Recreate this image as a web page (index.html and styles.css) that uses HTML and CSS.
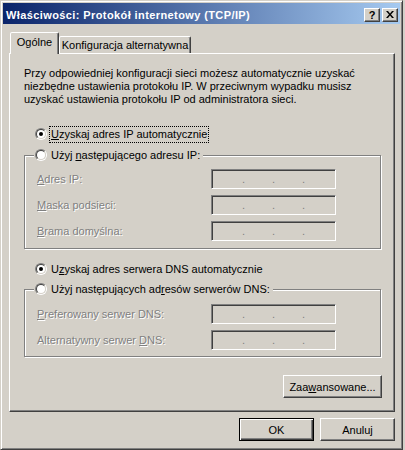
FILE: index.html
```html
<!DOCTYPE html>
<html lang="pl">
<head>
<meta charset="utf-8">
<title>Właściwości: Protokół internetowy (TCP/IP)</title>
<link rel="stylesheet" href="styles.css">
</head>
<body>
<div class="window">
  <div class="titlebar">
    <span class="title">Właściwości: Protokół internetowy (TCP/IP)</span>
    <div class="caption-btns">
      <button class="cap-btn help">?</button>
      <button class="cap-btn close"><svg width="8" height="7" viewBox="0 0 8 7"><path d="M0 0h2l2 2.4L6 0h2L5 3.5 8 7H6L4 4.6 2 7H0l3-3.5z" fill="#000"/></svg></button>
    </div>
  </div>
  <div class="dlg-body">
    <div class="tabs">
      <div class="tab active">Ogólne</div>
      <div class="tab inactive">Konfiguracja alternatywna</div>
    </div>
    <div class="panel">
      <p class="intro">Przy odpowiedniej konfiguracji sieci możesz automatycznie uzyskać<br>niezbędne ustawienia protokołu IP. W przeciwnym wypadku musisz<br>uzyskać ustawienia protokołu IP od administratora sieci.</p>

      <div class="radio-row r-auto-ip"><span class="radio checked"></span><span class="rlabel focus"><u>U</u>zyskaj adres IP automatycznie</span></div>

      <fieldset class="group g-ip">
        <legend class="radio-row"><span class="radio"></span><span class="rlabel">Użyj <u>n</u>astępującego adresu IP:</span></legend>
        <div class="field"><span class="flabel"><u>A</u>dres IP:</span><span class="ipbox"><span>.</span><span>.</span><span>.</span></span></div>
        <div class="field"><span class="flabel"><u>M</u>aska podsieci:</span><span class="ipbox"><span>.</span><span>.</span><span>.</span></span></div>
        <div class="field"><span class="flabel"><u>B</u>rama domyślna:</span><span class="ipbox"><span>.</span><span>.</span><span>.</span></span></div>
      </fieldset>

      <div class="radio-row r-auto-dns"><span class="radio checked"></span><span class="rlabel">U<u>z</u>yskaj adres serwera DNS automatycznie</span></div>

      <fieldset class="group g-dns">
        <legend class="radio-row"><span class="radio"></span><span class="rlabel">Użyj następujących ad<u>r</u>esów serwerów DNS:</span></legend>
        <div class="field"><span class="flabel"><u>P</u>referowany serwer DNS:</span><span class="ipbox"><span>.</span><span>.</span><span>.</span></span></div>
        <div class="field"><span class="flabel">Alternatywny serwer <u>D</u>NS:</span><span class="ipbox"><span>.</span><span>.</span><span>.</span></span></div>
      </fieldset>

      <div class="adv-row"><button class="btn adv">Zaa<u>w</u>ansowane...</button></div>
    </div>
    <div class="dlg-buttons">
      <button class="btn default">OK</button>
      <button class="btn">Anuluj</button>
    </div>
  </div>
</div>
</body>
</html>
```

FILE: styles.css
```css
* { box-sizing: border-box; }

html, body {
  margin: 0;
  padding: 0;
  background: #d4d0c8;
}

body {
  font-family: "Liberation Sans", Arial, sans-serif;
  font-size: 11px;
  color: #000;
}

u { text-decoration: underline; text-underline-offset: 1px; }

.window {
  width: 403px;
  height: 450px;
  border: 1px solid;
  border-color: #d4d0c8 #404040 #404040 #d4d0c8;
  box-shadow: inset 1px 1px #fff, inset -1px -1px #808080;
  padding: 2px;
  background: #d4d0c8;
  display: flex;
  flex-direction: column;
}

.titlebar {
  height: 21px;
  flex: none;
  display: flex;
  align-items: flex-start;
  padding: 5px 2px 0 3px;
  background: linear-gradient(to right, #0a246a, #a6caf0);
  color: #fff;
}

.title {
  font-weight: bold;
  font-size: 11px;
  line-height: 14px;
  letter-spacing: 0.4px;
  white-space: nowrap;
}

.caption-btns {
  margin-left: auto;
  display: flex;
  gap: 2px;
}

.cap-btn {
  width: 16px;
  height: 14px;
  padding: 0;
  margin: 0;
  background: #d4d0c8;
  border: 1px solid;
  border-color: #fff #404040 #404040 #fff;
  box-shadow: inset -1px -1px #808080, inset 1px 1px #d4d0c8;
  display: flex;
  align-items: center;
  justify-content: center;
  font-family: "Liberation Sans", Arial, sans-serif;
  font-weight: bold;
  font-size: 11px;
  line-height: 12px;
  color: #000;
}

.cap-btn.help { padding-bottom: 1px; }
.cap-btn.close svg { display: block; margin-top: -1px; }

.dlg-body {
  flex: 1;
  padding: 8px 5px 6px 6px;
  display: flex;
  flex-direction: column;
}

.tabs {
  display: flex;
  align-items: flex-end;
  padding-left: 1px;
  margin-bottom: -1px;
  position: relative;
  z-index: 1;
  height: 22px;
}

.tab {
  border: 1px solid;
  border-bottom: none;
  border-color: #fff #404040 transparent #fff;
  box-shadow: inset -1px 0 #808080;
  border-radius: 2px 2px 0 0;
  text-align: center;
  line-height: 13px;
  white-space: nowrap;
  background: #d4d0c8;
}

.tab.active {
  width: 49px;
  height: 22px;
  padding-top: 3px;
}

.tab.inactive {
  width: 132px;
  height: 17px;
  padding-top: 2px;
  margin-bottom: 1px;
}

.panel {
  width: 386px;
  border: 1px solid;
  border-color: #fff #404040 #404040 #fff;
  box-shadow: inset -1px -1px #808080;
  padding: 13px 13px 13px 14px;
  display: flex;
  flex-direction: column;
}

.intro {
  margin: 0;
  line-height: 13px;
  white-space: nowrap;
}

.radio-row {
  display: flex;
  align-items: center;
  gap: 3px;
  height: 16px;
}

.r-auto-ip { margin: 20px 0 0 11px; }
.r-auto-dns { margin: 12px 0 0 11px; }

.radio {
  position: relative;
  flex: none;
  width: 12px;
  height: 12px;
  border-radius: 50%;
  border: 1px solid;
  border-color: #808080 #fff #fff #808080;
}

.radio::before {
  content: "";
  position: absolute;
  inset: 0;
  border-radius: 50%;
  border: 1px solid;
  border-color: #404040 #d4d0c8 #d4d0c8 #404040;
  background: #fff;
}

.radio.checked::after {
  content: "";
  position: absolute;
  left: 3px;
  top: 3px;
  width: 4px;
  height: 4px;
  border-radius: 50%;
  background: #000;
}

.rlabel {
  line-height: 13px;
  padding: 1px;
  white-space: nowrap;
}

.rlabel.focus {
  outline: 1px dotted #000;
  outline-offset: 0;
}

.group {
  margin: 0;
  min-width: 0;
  border: 1px solid #808080;
  box-shadow: inset 1px 1px #fff, 1px 1px #fff;
  padding: 6px 0 7px 0;
  display: flex;
  flex-direction: column;
  gap: 6px;
}

.g-ip { margin-top: 5px; }
.g-dns { margin-top: 4px; padding-top: 7px; padding-bottom: 6px; }

.group legend {
  margin-left: 9px;
  padding: 0 2px 0 1px;
  background: #d4d0c8;
}

.field {
  display: flex;
  align-items: center;
  height: 20px;
  padding-left: 12px;
}

.flabel {
  width: 174px;
  flex: none;
  color: #808080;
  text-shadow: 1px 1px 0 #fff;
  line-height: 13px;
  white-space: nowrap;
}

.ipbox {
  width: 125px;
  height: 20px;
  flex: none;
  border: 1px solid;
  border-color: #808080 #fff #fff #808080;
  box-shadow: inset 1px 1px #404040, inset -1px -1px #d4d0c8;
  background: #d4d0c8;
  display: flex;
  padding: 1px 0 0 30px;
  line-height: 16px;
  color: #808080;
}

.ipbox span {
  width: 30px;
  flex: none;
}

.adv-row {
  display: flex;
  justify-content: flex-end;
  margin: 18px -1px 0 0;
}

.btn {
  font-family: "Liberation Sans", Arial, sans-serif;
  font-size: 11px;
  color: #000;
  background: #d4d0c8;
  height: 23px;
  padding: 0;
  margin: 0;
  border: 1px solid;
  border-color: #fff #404040 #404040 #fff;
  box-shadow: inset -1px -1px #808080, inset 1px 1px #d4d0c8;
  width: 75px;
}

.btn.adv { width: 99px; }

.btn.default {
  border: 1px solid #000;
  box-shadow: inset 1px 1px #fff, inset -1px -1px #404040, inset -2px -2px #808080;
}

.dlg-buttons {
  display: flex;
  justify-content: flex-end;
  gap: 6px;
  margin-top: 6px;
}
```
